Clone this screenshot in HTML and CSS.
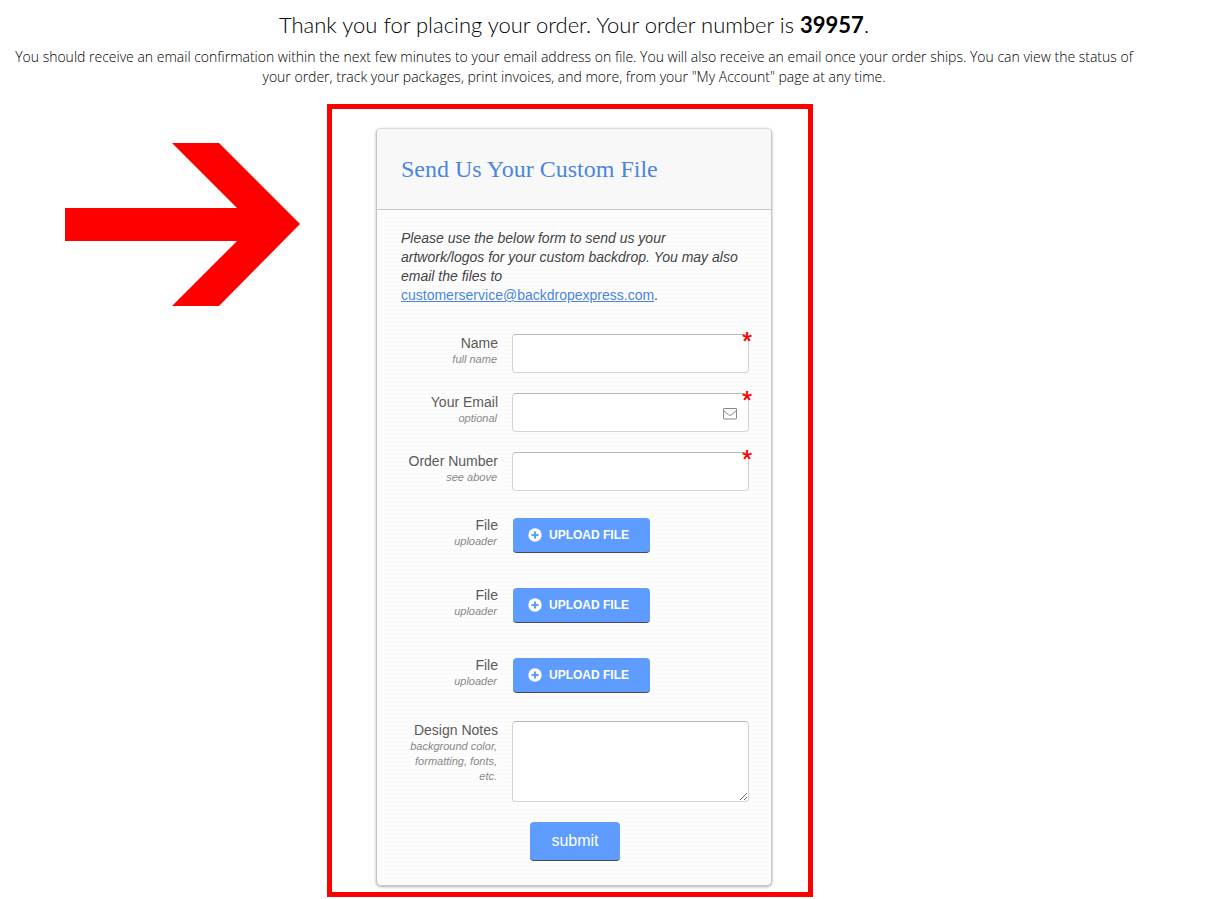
FILE: index.html
```html
<!DOCTYPE html>
<html lang="en">
<head>
    <meta charset="UTF-8">
    <meta name="viewport" content="width=device-width, initial-scale=1.0">
    <title>Order Confirmation</title>
    <link rel="stylesheet" href="styles.css">
</head>
<body>

    <div class="thanks">
        <h1>Thank you for placing your order. Your order number is <strong>39957</strong>.</h1>
        <p>You should receive an email confirmation within the next few minutes to your email address on file. You will also receive an email once your order ships. You can view the status of your order, track your packages, print invoices, and more, from your "My Account" page at any time.</p>
    </div>

    <div class="stage">
        <svg class="arrow" width="235" height="163" viewBox="0 0 235 163" aria-hidden="true">
            <polygon points="0,65 172,65 107,0 154,0 235,81 154,163 107,163 172,98 0,98" fill="#ff0000"/>
        </svg>

        <div class="frame">
            <form class="card">
                <div class="card-header">
                    <h2>Send Us Your Custom File</h2>
                </div>

                <div class="card-body">
                    <p class="intro"><em>Please use the below form to send us your artwork/logos for your custom backdrop. You may also email the files to</em> <a href="mailto:customerservice@backdropexpress.com">customerservice@backdropexpress.com</a>.</p>

                    <div class="row">
                        <label for="name">Name <small>full name</small></label>
                        <div class="field">
                            <input type="text" id="name" required>
                            <span class="required">*</span>
                        </div>
                    </div>

                    <div class="row">
                        <label for="email">Your Email <small>optional</small></label>
                        <div class="field">
                            <input type="email" id="email" required>
                            <svg class="envelope" width="14" height="12" viewBox="0 0 14 12" fill="none" stroke="#888888" aria-hidden="true">
                                <rect x="0.5" y="0.5" width="13" height="10.5" rx="0.5"/>
                                <path d="M0.8 2.8 L5.6 6.8 Q7 7.9 8.4 6.8 L13.2 2.8"/>
                            </svg>
                            <span class="required">*</span>
                        </div>
                    </div>

                    <div class="row">
                        <label for="order">Order Number <small>see above</small></label>
                        <div class="field">
                            <input type="text" id="order" required>
                            <span class="required">*</span>
                        </div>
                    </div>

                    <div class="row file-row">
                        <label for="file1">File <small>uploader</small></label>
                        <button type="button" class="upload" id="file1">
                            <svg width="14" height="14" viewBox="0 0 14 14" aria-hidden="true">
                                <circle cx="7" cy="7" r="6.7" fill="#ffffff"/>
                                <path d="M7 3.5 V10.5 M3.5 7 H10.5" stroke="#5e9cff" stroke-width="2"/>
                            </svg>
                            UPLOAD FILE
                        </button>
                    </div>

                    <div class="row file-row">
                        <label for="file2">File <small>uploader</small></label>
                        <button type="button" class="upload" id="file2">
                            <svg width="14" height="14" viewBox="0 0 14 14" aria-hidden="true">
                                <circle cx="7" cy="7" r="6.7" fill="#ffffff"/>
                                <path d="M7 3.5 V10.5 M3.5 7 H10.5" stroke="#5e9cff" stroke-width="2"/>
                            </svg>
                            UPLOAD FILE
                        </button>
                    </div>

                    <div class="row file-row">
                        <label for="file3">File <small>uploader</small></label>
                        <button type="button" class="upload" id="file3">
                            <svg width="14" height="14" viewBox="0 0 14 14" aria-hidden="true">
                                <circle cx="7" cy="7" r="6.7" fill="#ffffff"/>
                                <path d="M7 3.5 V10.5 M3.5 7 H10.5" stroke="#5e9cff" stroke-width="2"/>
                            </svg>
                            UPLOAD FILE
                        </button>
                    </div>

                    <div class="row">
                        <label for="notes">Design Notes <small>background color, formatting, fonts, etc.</small></label>
                        <textarea id="notes" rows="4"></textarea>
                    </div>

                    <button type="submit" class="submit">submit</button>
                </div>
            </form>
        </div>
    </div>

</body>
</html>
```
FILE: styles.css
```css
* {
    box-sizing: border-box;
}
body {
    margin: 0;
    background: #ffffff;
    color: #000000;
    font-family: "Liberation Sans", Arial, sans-serif;
}
.thanks {
    padding: 10px 80px 17px 12px;
    text-align: center;
}
.thanks h1 {
    margin: 0 0 7px;
    font-family: "Century Gothic", Lato, sans-serif;
    font-size: 22px;
    font-weight: 300;
    line-height: 30px;
}
.thanks strong {
    font-weight: 700;
}
.thanks p {
    margin: 0;
    font-family: "Century Gothic", "Open Sans", sans-serif;
    font-size: 14px;
    font-weight: 300;
    line-height: 20px;
}

/* arrow | framed form | empty side */
.stage {
    display: grid;
    grid-template-columns: 1fr 486px 1fr;
    padding-right: 76px;
}
.arrow {
    justify-self: end;
    margin: 39px 27px 0 0;
}
.frame {
    border: 5px solid #ff0000;
    padding: 19px 36px 6px 44px;
}
.card {
    border: 1px solid #c4c4c4;
    border-top-color: #dddddd;
    border-radius: 5px;
    overflow: hidden;
    box-shadow: 0 1px 3px rgba(0, 0, 0, 0.3);
    background-color: #fefefe;
    background-image:
        linear-gradient(#fafafa 1px, transparent 1px),
        linear-gradient(90deg, #fafafa 1px, transparent 1px);
    background-size: 4px 4px;
}
.card-header {
    padding: 25px 24px;
    background: #f8f8f8;
    border-bottom: 1px solid #c8c8c8;
}
.card-header h2 {
    margin: 0;
    font-family: "Liberation Serif", "Times New Roman", serif;
    font-size: 24px;
    font-weight: 400;
    line-height: 30px;
    color: #4a86dd;
}
.card-body {
    display: flex;
    flex-direction: column;
    gap: 20px;
    padding: 19px 22px 24px 24px;
}
.intro {
    margin: 0 0 9px;
    font-size: 14px;
    line-height: 19px;
    color: #444444;
}
.intro a {
    color: #4a86dd;
}
.row {
    display: grid;
    grid-template-columns: 97px 1fr;
    column-gap: 14px;
    align-items: start;
}
.row label {
    font-size: 14px;
    line-height: 18px;
    text-align: right;
    color: #5a5a5a;
}
.row small {
    display: block;
    padding-right: 1px;
    font-size: 11px;
    font-style: italic;
    line-height: 15px;
    color: #888888;
}
.field {
    position: relative;
}
input, textarea {
    display: block;
    width: 100%;
    padding: 8px;
    border: 1px solid #d4d4d4;
    border-top-color: #b8b8b8;
    border-radius: 4px;
    background: #ffffff;
    font-family: inherit;
    font-size: 14px;
    line-height: 16px;
}
input {
    height: 39px;
}
textarea {
    height: 81px;
    resize: vertical;
}
.required {
    position: absolute;
    top: -5px;
    right: -3px;
    font-family: Roboto, sans-serif;
    font-size: 22px;
    font-weight: 700;
    line-height: 24px;
    color: #ff0000;
}
.envelope {
    position: absolute;
    top: 15px;
    right: 12px;
}
.file-row {
    padding: 5px 0 8px;
}
.upload, .submit {
    border: 0;
    border-bottom: 1px solid #4a4a55;
    border-radius: 4px;
    background: #5e9cff;
    color: #ffffff;
    font-family: inherit;
    cursor: pointer;
}
.upload {
    display: flex;
    align-items: center;
    gap: 7px;
    justify-self: start;
    width: 137px;
    height: 35px;
    margin: 2px 0 0 1px;
    padding: 0 15px;
    font-size: 12px;
    font-weight: 700;
}
.submit {
    align-self: center;
    height: 39px;
    padding: 0 21px;
    font-size: 16px;
}
```
